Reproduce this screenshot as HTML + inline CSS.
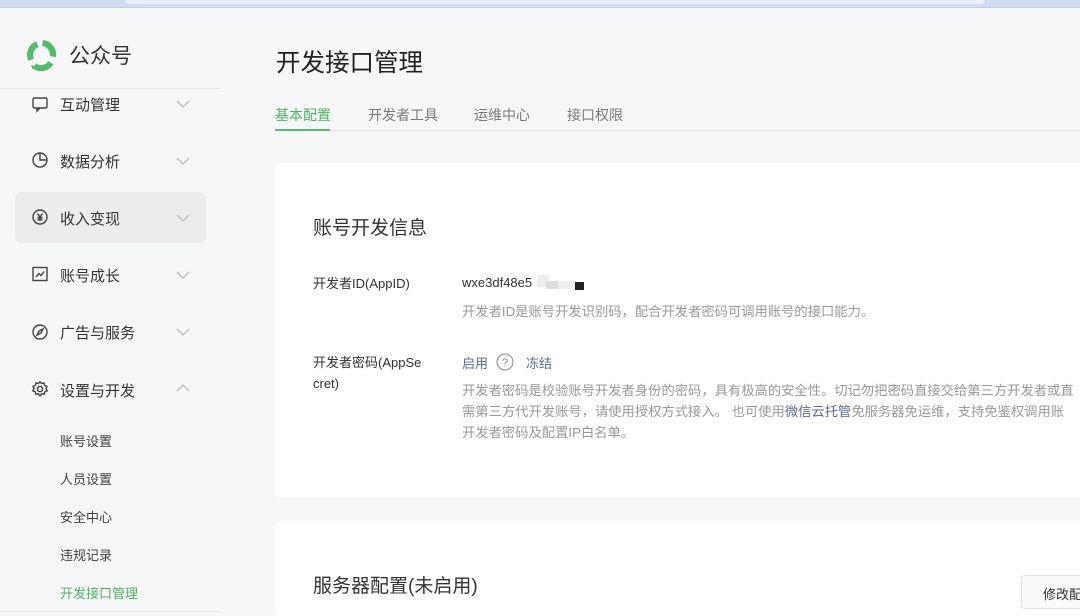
<!DOCTYPE html>
<html><head><meta charset="utf-8"><style>
*{margin:0;padding:0;box-sizing:border-box}
html{width:1080px;height:616px;overflow:hidden}
body{width:1080px;height:616px;overflow:hidden;background:#f6f7f9;font-family:"Liberation Sans","Noto Sans CJK SC",sans-serif;position:relative;color:#333}
.topbar{position:absolute;left:0;top:0;width:1080px;height:8px;background:#cfdcf2;border-bottom:1px solid #c3cfe6}
.topbar i{position:absolute;left:125px;top:0;width:860px;height:4px;background:#e9eef8;border-radius:0 0 6px 6px}
.abs{position:absolute}
.logo-t{left:69px;top:40px;font-size:21px;color:#333}
.sep{left:0;top:88px;width:220px;height:1px;background:#e7e8eb}
.nav{left:60px;font-size:15px;color:#353535}
.ico{left:31px;width:18px;height:18px}
.chev{left:176px;width:14px;height:10px}
.sub{left:60px;font-size:13px;color:#444}
.h1{left:276px;top:44px;font-size:24.5px;color:#222}
.tab{top:105px;font-size:14px;color:#7a7a7a}
.card{background:#fff;border-radius:4px}
.lbl{left:313px;font-size:13px;color:#333;line-height:21px}
.desc{left:462px;font-size:13.3px;color:#999;line-height:21px;white-space:nowrap}
.blue{color:#576b95}
</style></head><body>
<div class="topbar"><i></i></div>
<svg class="abs" style="left:25px;top:38px" width="33" height="33" viewBox="0 0 32 32">
<g fill="none" stroke="#55bb6b" stroke-width="6">
<path d="M6 21 A11 11 0 0 1 12 6"/>
<path d="M17 5 A11 11 0 0 1 27 18"/>
<path d="M25 24 A11 11 0 0 1 9 27"/>
</g>
<path d="M6 26 L12 28 L7 30 Z" fill="#55bb6b"/>
</svg>
<div class="abs logo-t">公众号</div>
<div class="abs sep"></div>

<div class="abs" style="left:15px;top:192px;width:191px;height:51px;background:#ececef;border-radius:6px"></div>

<svg class="abs ico" style="top:95px" viewBox="0 0 18 18" fill="none" stroke="#444" stroke-width="1.4"><rect x="2" y="3" width="14" height="10" rx="1.5"/><path d="M6 13 L6 16 L9 13"/></svg>
<div class="abs nav" style="top:94px">互动管理</div>
<svg class="abs ico" style="top:151px" viewBox="0 0 18 18" fill="none" stroke="#444" stroke-width="1.4"><circle cx="9" cy="9" r="7"/><path d="M9 2 V9 H16"/></svg>
<div class="abs nav" style="top:151px">数据分析</div>
<svg class="abs ico" style="top:208px" viewBox="0 0 18 18" fill="none" stroke="#444" stroke-width="1.4"><circle cx="9" cy="9" r="7"/><path d="M6.5 5.5 L9 9 L11.5 5.5 M9 9 V13 M6.5 9.5 H11.5 M6.5 11.5 H11.5"/></svg>
<div class="abs nav" style="top:208px">收入变现</div>
<svg class="abs ico" style="top:265px" viewBox="0 0 18 18" fill="none" stroke="#444" stroke-width="1.4"><rect x="2" y="2.5" width="14" height="13"/><path d="M5 12 L8 8.5 L10 10.5 L13 6.5"/></svg>
<div class="abs nav" style="top:265px">账号成长</div>
<svg class="abs ico" style="top:323px" viewBox="0 0 18 18" fill="none" stroke="#444" stroke-width="1.4"><circle cx="9" cy="9" r="7"/><path d="M12 6 L10 10 L6 12 L8 8 Z"/></svg>
<div class="abs nav" style="top:322px">广告与服务</div>
<svg class="abs ico" style="top:380px" viewBox="0 0 18 18" fill="none" stroke="#444" stroke-width="1.4"><path d="M9 1.8 L10.6 3.6 L13 3 L13.6 5.4 L16 6.4 L15 8.6 L16.2 10.8 L13.8 11.8 L13.2 14.2 L10.8 13.8 L9 16 L7.2 13.8 L4.8 14.2 L4.2 11.8 L1.8 10.8 L3 8.6 L2 6.4 L4.4 5.4 L5 3 L7.4 3.6 Z"/><circle cx="9" cy="9" r="2.6"/></svg>
<div class="abs nav" style="top:380px">设置与开发</div>

<svg class="abs chev" style="top:99px" viewBox="0 0 14 10" fill="none" stroke="#bbb" stroke-width="1.3"><path d="M1 2 L7 8 L13 2"/></svg>
<svg class="abs chev" style="top:156px" viewBox="0 0 14 10" fill="none" stroke="#bbb" stroke-width="1.3"><path d="M1 2 L7 8 L13 2"/></svg>
<svg class="abs chev" style="top:213px" viewBox="0 0 14 10" fill="none" stroke="#bbb" stroke-width="1.3"><path d="M1 2 L7 8 L13 2"/></svg>
<svg class="abs chev" style="top:270px" viewBox="0 0 14 10" fill="none" stroke="#bbb" stroke-width="1.3"><path d="M1 2 L7 8 L13 2"/></svg>
<svg class="abs chev" style="top:327px" viewBox="0 0 14 10" fill="none" stroke="#bbb" stroke-width="1.3"><path d="M1 2 L7 8 L13 2"/></svg>
<svg class="abs chev" style="top:383px" viewBox="0 0 14 10" fill="none" stroke="#bbb" stroke-width="1.3"><path d="M1 8 L7 2 L13 8"/></svg>

<div class="abs sub" style="top:431px">账号设置</div>
<div class="abs sub" style="top:469px">人员设置</div>
<div class="abs sub" style="top:507px">安全中心</div>
<div class="abs sub" style="top:545px">违规记录</div>
<div class="abs sub" style="top:583px;color:#4fb35f">开发接口管理</div>
<div class="abs" style="left:0;top:611px;width:220px;height:1px;background:#e7e8eb"></div>

<div class="abs h1">开发接口管理</div>
<div class="abs tab" style="left:275px;color:#4fb35f">基本配置</div>
<div class="abs tab" style="left:368px">开发者工具</div>
<div class="abs tab" style="left:474px">运维中心</div>
<div class="abs tab" style="left:567px">接口权限</div>
<div class="abs" style="left:275px;top:130px;width:805px;height:1px;background:#e2e3e6"></div>
<div class="abs" style="left:275px;top:129px;width:55px;height:2px;background:#55bb6b"></div>

<div class="abs card" style="left:275px;top:163px;width:820px;height:334px"></div>
<div class="abs card" style="left:275px;top:521px;width:820px;height:95px"></div>

<div class="abs" style="left:313px;top:213px;font-size:19px;color:#333">账号开发信息</div>
<div class="abs lbl" style="top:273px">开发者ID(AppID)</div>
<div class="abs" style="left:462px;top:275px;font-size:13px;color:#333">wxe3df48e5</div>
<div class="abs" style="left:537px;top:275px;width:12px;height:12px;background:#eee"></div>
<div class="abs" style="left:546px;top:281px;width:12px;height:8px;background:#ddd"></div>
<div class="abs" style="left:558px;top:281px;width:16px;height:8px;background:#eee"></div>
<div class="abs" style="left:575px;top:282px;width:9px;height:8px;background:#222"></div>
<div class="abs desc" style="top:301px">开发者ID是账号开发识别码，配合开发者密码可调用账号的接口能力。</div>
<div class="abs lbl" style="top:352px;width:125px">开发者密码(AppSe<br>cret)</div>
<div class="abs blue" style="left:462px;top:353px;font-size:13px">启用</div>
<svg class="abs" style="left:496px;top:353px" width="18" height="18" viewBox="0 0 18 18" fill="none" stroke="#888" stroke-width="1"><circle cx="9" cy="9" r="8"/><text x="9" y="13" font-size="11" text-anchor="middle" fill="#888" stroke="none" font-family="Liberation Sans">?</text></svg>
<div class="abs blue" style="left:526px;top:353px;font-size:13px">冻结</div>
<div class="abs desc" style="top:380px">开发者密码是校验账号开发者身份的密码，具有极高的安全性。切记勿把密码直接交给第三方开发者或直<br>需第三方代开发账号，请使用授权方式接入。 也可使用<span class="blue">微信云托管</span>免服务器免运维，支持免鉴权调用账<br>开发者密码及配置IP白名单。</div>

<div class="abs" style="left:313px;top:571px;font-size:19px;color:#333">服务器配置(未启用)</div>
<div class="abs" style="left:1021px;top:575px;width:80px;height:34px;border:1px solid #e0e0e0;border-radius:4px;background:#fafafa;font-size:13px;color:#333;padding:8px 0 0 21px">修改配置</div>
</body></html>
